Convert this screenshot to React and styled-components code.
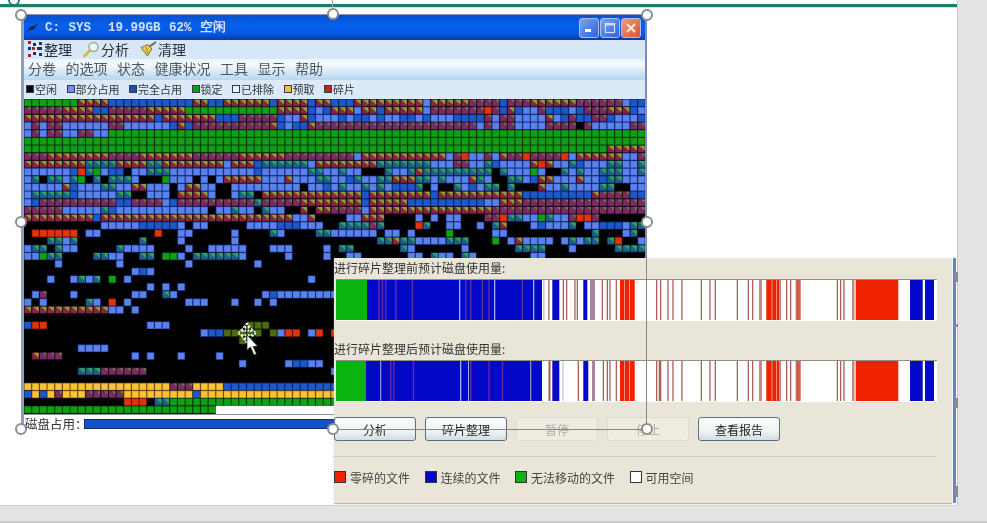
import styled, { createGlobalStyle } from 'styled-components';

const CJK = `"Noto Sans CJK SC", "Liberation Sans", sans-serif`;

const GlobalStyle = createGlobalStyle`
  html, body { margin: 0; padding: 0; background: #e3e4e3; }
  body { font-family: ${CJK}; }
`;

const Page = styled.div`
  width: 987px;
  height: 523px;
  overflow: hidden;
  background: #e3e4e3;
  position: relative;
  filter: blur(0.55px);
`;

const Slide = styled.div`
  position: relative;
  display: flow-root;
  width: 957px;
  height: 505px;
  background: #fff;
  border-right: 1px solid #c4c8c5;
  border-bottom: 1px solid #d0d2d0;
`;

const FooterLine = styled.div`
  position: absolute;
  left: 0;
  right: 0;
  top: 521px;
  height: 2px;
  background: #c9cbc9;
`;

const TealLine = styled.div`
  height: 3px;
  margin-top: 4px;
  background: #1f7d6c;
  box-shadow: 0 1px 1px #bfe4da;
`;

const Window = styled.div`
  position: absolute;
  left: 21px;
  top: 14px;
  width: 626px;
  height: 415px;
  display: flex;
  flex-direction: column;
  background: #fff;
  border-left: 3px solid #8d9cc0;
  border-right: 2px solid #7d8cb4;
  border-top: 1px solid #8a97b8;
  box-sizing: border-box;
`;

const TitleBar = styled.div`
  height: 25px;
  flex: none;
  display: flex;
  align-items: center;
  padding: 0 4px 0 1px;
  background: linear-gradient(#0a50cc 0%, #0660ec 40%, #0757e2 75%, #0a3ca8 100%);
`;

const TitleText = styled.div`
  margin-left: 4px;
  font-family: "Liberation Mono", monospace;
  font-size: 12.5px;
  font-weight: 700;
  color: #d4e0fa;
  white-space: pre;
  word-spacing: 1px;
  flex: 1;
`;

const WinButtons = styled.div`
  display: flex;
  gap: 1px;
`;

const WinButton = styled.div`
  width: 20px;
  height: 20px;
  box-sizing: border-box;
  border: 1px solid #a9c0ee;
  border-radius: 3px;
  display: flex;
  align-items: center;
  justify-content: center;
  background: ${(p) =>
    p.$close
      ? 'linear-gradient(135deg, #eda07c, #d5562a)'
      : 'linear-gradient(135deg, #7fa4ee, #2b62d8)'};
`;

const Toolbar = styled.div`
  height: 19px;
  box-sizing: border-box;
  flex: none;
  display: flex;
  align-items: center;
  padding: 0 0 2px 4px;
  gap: 11px;
  font-size: 14px;
  line-height: 16px;
  color: #2b3038;
  background: #d7e7f8;
`;

const ToolItem = styled.div`
  display: flex;
  align-items: center;
  gap: 1px;
`;

const MenuBar = styled.div`
  height: 21px;
  box-sizing: border-box;
  flex: none;
  display: flex;
  align-items: center;
  padding: 0 0 3px 4px;
  gap: 9.5px;
  font-size: 14px;
  line-height: 16px;
  color: #4d5864;
  background: linear-gradient(#eaf5fd 0%, #f3faff 25%, #cfe4f5 70%, #b9d6ee 100%);
`;

const KeyBar = styled.div`
  height: 19px;
  box-sizing: border-box;
  flex: none;
  display: flex;
  align-items: center;
  padding: 0 0 1px 2px;
  gap: 9.5px;
  font-size: 11px;
  line-height: 13px;
  color: #333;
  background: #dce9f8;
`;

const KeyItem = styled.div`
  display: flex;
  align-items: center;
  gap: 1px;
`;

const KeySwatch = styled.span`
  width: 8px;
  height: 8px;
  box-sizing: border-box;
  border: 1px solid #333a50;
  background: ${(p) => p.$color};
`;

const MapFrame = styled.div`
  height: 315px;
  flex: none;
  background: #000;
  overflow: hidden;
  svg { display: block; }
`;

const Status = styled.div`
  flex: 1;
  min-height: 0;
  display: flex;
  align-items: center;
  padding: 3px 0 0 1px;
  border-top: 1px solid #8b8f98;
  font-size: 12.5px;
  line-height: 11px;
  color: #333;
`;

const StatusLabel = styled.span`
  width: 59px;
  flex: none;
  white-space: nowrap;
`;

const Usage = styled.div`
  flex: 1;
  height: 10px;
  box-sizing: border-box;
  background: #1253c8;
  border: 1px solid #1a2f70;
`;

const Panel = styled.div`
  position: absolute;
  left: 334px;
  top: 258px;
  width: 618px;
  height: 245px;
  box-sizing: border-box;
  background: #e9e6d9;
  box-shadow: 0 1px 1px #b8b7ad;
`;

const BarLabel = styled.div`
  height: 20px;
  line-height: 20px;
  font-size: 12px;
  color: #333;
  margin-top: ${(p) => p.$top}px;
`;

const BarChart = styled.svg`
  display: block;
  margin-top: 1px;
`;

const Buttons = styled.div`
  display: flex;
  gap: 9px;
  margin-top: 15px;
`;

const Button = styled.div`
  width: 82px;
  height: 24px;
  box-sizing: border-box;
  display: flex;
  align-items: center;
  justify-content: center;
  font-size: 12px;
  border-radius: 3px;
  color: ${(p) => (p.$disabled ? '#b0ae9f' : '#222')};
  border: 1px solid ${(p) => (p.$disabled ? '#dcdacb' : '#5b6f80')};
  background: ${(p) =>
    p.$disabled ? '#efede2' : 'linear-gradient(#fdfefe, #eef2f3 60%, #d5dde2)'};
`;

const Divider = styled.div`
  width: 603px;
  height: 1px;
  margin-top: 15px;
  background: #cfccbc;
`;

const Legend = styled.div`
  display: flex;
  gap: 14.5px;
  height: 20px;
  align-items: center;
  margin-top: 10px;
  font-size: 12px;
  color: #444;
`;

const LegendItem = styled.div`
  display: flex;
  align-items: center;
  gap: 4px;
`;

const LegendSwatch = styled.span`
  width: 12px;
  height: 12px;
  box-sizing: border-box;
  border: 1px solid #333;
  background: ${(p) => p.$color};
`;

const Strip = styled.div`
  position: absolute;
  left: 953px;
  top: 258px;
  width: 3px;
  height: 245px;
  background: #6d80c0;
`;

const StripMark = styled.div`
  position: absolute;
  left: 2px;
  top: ${(p) => p.$top}px;
  width: 3px;
  height: ${(p) => p.$height}px;
  background: #8a8c90;
`;

const Handle = styled.div`
  position: absolute;
  left: ${(p) => p.$x - 6}px;
  top: ${(p) => p.$y - 6}px;
  width: 12px;
  height: 12px;
  box-sizing: border-box;
  border-radius: 50%;
  background: #fff;
  border: 2px solid #8a8d8c;
`;

const GuideH = styled.div`
  position: absolute;
  left: 334px;
  top: 429px;
  width: 313px;
  height: 1px;
  background: #85888a;
`;

const GuideV = styled.div`
  position: absolute;
  left: 646px;
  top: 258px;
  width: 1px;
  height: 171px;
  background: #85888a;
`;

const RotateStem = styled.div`
  position: absolute;
  left: 332px;
  top: 0;
  width: 1px;
  height: 10px;
  background: #aaa;
`;

const TealKnob = styled.div`
  position: absolute;
  left: 8px;
  top: -6px;
  width: 12px;
  height: 12px;
  box-sizing: border-box;
  border-radius: 50%;
  border: 2px solid #1f7d6c;
  background: #fff;
`;

const Pointer = styled.svg`
  position: absolute;
  left: 236px;
  top: 322px;
`;

// run-length rows: letter + count, left half then right half
const rows = [
  'G7 F4 B11 F2 B2 F6 B1 F4 B1 F2 B3 F9 L1 F5 f4 B1 f3 F6 f6 L1 B2',
  'f5 F4 B2 f5 F5 G12 F4 B1 L1 B1 F3 L1 F2 B1 F5 L1 f7 R1 f1 B1 F1 B1 L2 f1 B3 L1 B1 f3 F3 B1 L1',
  'F17 B1 F7 B3 f5 B1 L2 F1 B1 L2 L1 B1 L1 B2 L1 B1 L2 B2 L1 B1 L3 B4 f1 L1 f2 L4 F1 L1 B1 f1 B2 f2 B1 L3 B1',
  'L1 f1 L1 f2 L6 f2 L6 B1 F1 B1 f10 F1 B1 L1 B2 F1 f3 f18 L1 f1 L1 f2 L4 f4 K1 f1 L5 f3',
  'L1 f1 L1 f2 L2 f2 L2 G70',
  'G81',
  'G76 F5',
  'f3 F8 f4 F7 f6 F6 f6 f3 L1 F11 L1 f1 R1 L2 f1 L1 F1 f2 R1 f4 R1 L1 F6 L2 f1',
  'F8 T4 F4 T2 F8 L1 F3 B1 T6 L1 F2 F6 T7 L3 f2 L2 T1 B1 L4 F1 R1 F1 L2 T1 B1 L3 T2 L2 T1',
  'L6 B1 R1 T1 G1 L1 B2 K1 L2 T3 L11 B1 L6 T2 L1 L1 T1 L2 K3 T1 L2 T1 F1 T9 K1 T1 L3 G1 L1 K2 T1 L1 T1 L2 T3 L2 T1',
  'L1 T1 K1 T2 L1 T1 G1 K1 T1 K1 T3 L1 K3 G1 L3 K1 L1 K1 L1 F5 L3 F1 L3 T2 L1 L1 B1 T1 L2 T2 F3 T2 L1 T1 L3 F1 T1 L1 K2 T2 L1 B1 F2 L3 F1 L2 B1 T2 L3 B1',
  'L5 F1 B1 L3 T2 L2 F2 L3 K1 L1 F2 L2 K2 L9 K1 L2 B1 L1 T1 L2 T1 L1 T1 L1 B3 T1 K1 L1 K2 T1 L1 B1 L1 T2 K1 T1 K3 F1 L2 T1 L4 T2 K2 L2',
  'L1 T5 B1 L5 T2 K2 L3 K1 F4 L1 K2 L1 T2 K1 F9 F4 B1 F8 B1 F11 B9 F1 f4 B2',
  'L1 B1 f10 B2 f4 L1 B1 f10 T1 f5 F4 F4 B1 F5 B10 L2 F3 f16',
  'f5 L5 T1 B1 L12 K1 L2 T1 L2 K1 T1 L2 K2 F1 K1 F2 f4 L1 F16 f20',
  'F9 B1 F25 L2 F1 K2 K2 L2 F3 K4 L1 K1 L1 K1 L2 K3 f2 R1 T2 L2 G1 T1 L2 f1 R2 f1 K6',
  'K10 L5 B5 L1 K1 L2 K5 L4 B3 L3 K1 K1 T4 f1 T1 K4 R1 T1 K2 L2 K2 L1 K1 T1 F1 K3 L1 B1 L3 T1 K1 L2 B3 L1 T2',
  'K1 R6 K1 L2 K7 R1 K2 L2 K5 L1 K4 T1 L1 K4 T2 L6 K1 L2 K1 L1 K4 G1 K5 L2 K11 T1 K3 L1 T1 K1',
  'K3 T2 L1 T1 K8 T1 K4 L1 K6 L1 K12 K6 T2 F1 T2 L4 T3 K3 G1 K1 L1 F1 L4 K1 L1 T1 L1 T2 K1 T1 R1 K2 L1',
  'L1 T2 K1 T1 L2 K5 T1 L4 K4 L1 K2 L5 K3 L3 K4 L1 K1 T2 K6 T1 L1 K6 L1 K6 T4 K3 L1 K5 T4',
  'L2 G1 T2 K4 T2 L2 K2 T2 K1 G2 L1 K1 T6 L1 K5 L1 K4 L1 K2 L2 K6 L2 K1 T1 L2 K1 T1 L1 K7 L2 K13',
  'K4 L1 K7 L1 K8 L1 K8 L1 K9',
  'K14 L1 B1 L1',
  'K3 L1 K2 L1 T1 L1 T1 K1 G1 K1 L1 K23 L1 K3',
  'K16 L1 K1 L1 K1 L1',
  'K1 L1 f1 K3 L1 K7 L2 K2 T1 L1 K11 L1 B1 L8',
  'L1 K1 L1 K5 T1 L1 K1 R1 K1 L1 K7 L3 K3 L1 K2 L1 K1 L1 K8',
  'F11 L2 K1 L1',
  'K81',
  'B1 R2 K13 L3 K10 O3',
  'K23 L1 B2 O5 K1 O1 L1 R2 K1 L1 R1 K1 R1',
  'K28 O1',
  'K7 L4',
  'K1 F1 f3 K9 L1 K1 L1 K3 L1 K4 L1',
  'K28 L1 K5 L1 B2 L2',
  'K7 T3 f6 K24 L1',
  'K81',
  'Y19 f3 Y4 B15',
  'B1 Y1 B1 Y1 f1 Y3 f5 Y9 B1 Y18',
  'K13 R3 K1 T2 G22',
  'G25 W56',
];

const PITCH = 7.67;

const cellColors = {
  G: ['#075010', '#10a014'],
  B: ['#0e3080', '#1c58c8'],
  L: ['#1f3c98', '#5a82ea'],
  R: ['#7a1806', '#e0340f'],
  Y: ['#8c6a14', '#f8c23a'],
  O: ['#142808', '#4c6c10'],
  F: ['#2a0e20', '#8a2444'],
  f: ['#2a0e30', '#7c2a62'],
  T: ['#0c2c50', '#1f5f90'],
};

const cornerColors = { F: '#86a82a', f: '#5c8a3a', T: '#2fa850' };

const parseRow = (row) => {
  const cells = [];
  row.split(' ').forEach((run) => {
    const n = Number(run.slice(1));
    for (let i = 0; i < n; i++) cells.push(run[0]);
  });
  return cells;
};

function DiskMap() {
  return (
    <svg width="622" height="315">
      {rows.map((row, r) =>
        parseRow(row).map((c, i) => {
          if (c === 'K') return null;
          const x = i * PITCH;
          const y = r * PITCH;
          if (c === 'W')
            return <rect key={`${r}-${i}`} x={x} y={y} width={PITCH + 1} height={PITCH + 1} fill="#fff" />;
          const [edge, fill] = cellColors[c];
          return (
            <g key={`${r}-${i}`}>
              <rect x={x} y={y} width={PITCH} height={PITCH} fill={edge} />
              <rect x={x + 0.7} y={y + 0.7} width={PITCH - 1.3} height={PITCH - 1.3} fill={fill} />
              {cornerColors[c] && (
                <polygon
                  points={
                    c === 'f'
                      ? `${x + 3.5},${y + 0.7} ${x + 7},${y + 0.7} ${x + 7},${y + 4}`
                      : `${x + 1.5},${y + 0.7} ${x + 7},${y + 0.7} ${x + 7},${y + 5.5}`
                  }
                  fill={cornerColors[c]}
                />
              )}
            </g>
          );
        })
      )}
    </svg>
  );
}

const BROWN = '#a8605c';
const PURPLE = '#5a2c9c';
const PALE = '#9cb4f0';
const RED = '#ee2200';
const BLUE = '#0408c8';

const sharedStripes = [
  ...[656, 660, 667.3, 672.3, 681.3, 700.7, 709.3, 714.7, 736.7, 747.7, 752].map((x) => [x, 1.3, BROWN]),
  [759, 3, '#c48a84'],
  [766.3, 13, RED],
  [771.5, 1, '#f0907c'],
  [776, 1, '#f0907c'],
  [779.5, 1.3, BROWN],
  [786, 1.3, BROWN],
  [790, 1.3, BROWN],
  [795.7, 5, '#d0604f'],
  [836.7, 1.3, BROWN],
  [840, 1.3, BROWN],
  [843.3, 1.3, BROWN],
  [852, 2.5, '#c48a84'],
  [855.7, 42.6, RED],
  [910, 12.7, BLUE],
  [925, 9, BLUE],
  [620, 14.7, RED],
  [624, 1, '#f0907c'],
  [629, 1, '#f0907c'],
];

const beforeBar = [
  [336, 31, '#0ab40e'],
  [367, 175, BLUE],
  ...[378.3, 381.7, 385, 395, 411.7, 465, 470, 481.7, 488.3, 521.7].map((x) => [x, 1.5, PURPLE]),
  [459, 1.3, PALE],
  [494, 1.3, PALE],
  [533, 1.3, PALE],
  [543.3, 1.2, '#d0b0b0'],
  [548.3, 1.3, BROWN],
  [552.3, 7, BLUE],
  [562.7, 1.3, BROWN],
  [566, 1.3, BROWN],
  [574.3, 1.3, BROWN],
  [576.7, 1.3, BROWN],
  [583.3, 4, BLUE],
  [590, 5, '#a884a0'],
  [601.7, 1.3, BROWN],
  [606.7, 1.3, BROWN],
  [609.3, 1.3, BROWN],
  [615.7, 1.3, BROWN],
  ...sharedStripes,
];

const afterBar = [
  [336, 30, '#0ab40e'],
  [366, 176, BLUE],
  ...[390, 393, 412.7, 470, 488.3, 501.7].map((x) => [x, 1.5, PURPLE]),
  [380, 1.3, '#8a88c8'],
  [460, 1.3, PALE],
  [468, 1, PALE],
  [530, 1.3, '#8a88c8'],
  [548.5, 2, '#a85c50'],
  [552.3, 7, BLUE],
  [562.3, 1.3, '#b8c8f0'],
  [577.7, 1.3, BROWN],
  [583.3, 5, BLUE],
  [592, 3, '#a884a0'],
  [602.7, 1.3, BROWN],
  [606.7, 1.3, BROWN],
  [609.3, 1.3, BROWN],
  [615.7, 1.3, BROWN],
  [658.7, 1.3, BROWN],
  ...sharedStripes,
];

function UsageBar({ segments }) {
  return (
    <BarChart width="603" height="42">
      <rect x="2" y="0" width="601" height="42" fill="#fff" />
      {segments.map(([x, w, color], i) => (
        <rect key={i} x={x - 334} y="0" width={w} height="41" fill={color} />
      ))}
      <rect x="2" y="0" width="601" height="1" fill="#8f8f88" />
    </BarChart>
  );
}

const keyItems = [
  { color: '#000', label: '空闲' },
  { color: '#6f93ea', label: '部分占用' },
  { color: '#1c50b0', label: '完全占用' },
  { color: '#10a014', label: '锁定' },
  { color: '#eef2fa', label: '已排除' },
  { color: '#f6c03a', label: '预取' },
  { color: '#d0201a', label: '碎片' },
];

const menuItems = ['分卷', '的选项', '状态', '健康状况', '工具', '显示', '帮助'];

const legendItems = [
  { color: '#ee2200', label: '零碎的文件' },
  { color: '#0408c8', label: '连续的文件' },
  { color: '#0ab40e', label: '无法移动的文件' },
  { color: '#fff', label: '可用空间' },
];

const buttons = [
  { label: '分析' },
  { label: '碎片整理' },
  { label: '暂停', disabled: true },
  { label: '停止', disabled: true },
  { label: '查看报告' },
];

const handles = [
  [21, 15], [333, 14], [647, 15],
  [21, 222], [647, 222],
  [21, 429], [333, 429], [647, 429],
];

const stripMarks = [
  [14, 10],
  [66, 3],
  [140, 10],
  [228, 11],
];

function BirdIcon() {
  return (
    <svg width="16" height="12" viewBox="0 0 16 12">
      <path d="M1 11 L5 5 L15 1 L9 5 L12 5 L7 8 L4 8 Z" fill="#1a2448" />
    </svg>
  );
}

function DefragIcon() {
  return (
    <svg width="15" height="16" viewBox="0 0 15 16">
      <path d="M1 1 L7 7 M13 1 L7 7 M1 15 L7 9 M13 15 L7 9" stroke="#f4f7fc" strokeWidth="2" />
      <g fill="#b01c30">
        <rect x="0" y="0" width="3" height="3" />
        <rect x="0" y="13" width="3" height="3" />
        <rect x="4" y="6" width="3" height="3" />
      </g>
      <g fill="#1c2c80">
        <rect x="0" y="6" width="3" height="3" />
        <rect x="5" y="2" width="3" height="3" />
        <rect x="5" y="11" width="3" height="3" />
        <rect x="11" y="1" width="3" height="3" />
        <rect x="11" y="12" width="3" height="3" />
        <rect x="9" y="6" width="5" height="3" />
      </g>
    </svg>
  );
}

function LensIcon() {
  return (
    <svg width="17" height="16" viewBox="0 0 17 16">
      <circle cx="10.5" cy="6" r="4.6" fill="#eef3f8" stroke="#a8a890" strokeWidth="1.5" />
      <path d="M7 9.5 L1.5 15" stroke="#d6b44c" strokeWidth="2.6" strokeLinecap="round" />
    </svg>
  );
}

function BroomIcon() {
  return (
    <svg width="17" height="16" viewBox="0 0 17 16">
      <path d="M16 1 L9 6" stroke="#6c6a3c" strokeWidth="2" />
      <path d="M8 3.5 L12 8 L7.5 15 L1 6.5 Z" fill="#e8c850" stroke="#5c5a30" strokeWidth="0.8" />
      <path d="M6 6 L8 13" stroke="#8c7a30" strokeWidth="0.8" />
    </svg>
  );
}

export default function App() {
  return (
    <Page>
      <GlobalStyle />
      <Slide>
        <TealLine />
        <TealKnob />
        <RotateStem />
        <Window>
          <TitleBar>
            <BirdIcon />
            <TitleText>{'C: SYS  19.99GB 62% 空闲'}</TitleText>
            <WinButtons>
              <WinButton>
                <svg width="10" height="10"><rect x="1" y="6" width="6" height="3" fill="#fff" /></svg>
              </WinButton>
              <WinButton>
                <svg width="12" height="12"><rect x="1.5" y="1.5" width="9" height="9" fill="none" stroke="#cfe0ff" strokeWidth="1.2" /><rect x="1" y="1" width="10" height="2.5" fill="#cfe0ff" /></svg>
              </WinButton>
              <WinButton $close>
                <svg width="12" height="12"><path d="M2 2 L10 10 M10 2 L2 10" stroke="#fbe8dc" strokeWidth="2.2" /></svg>
              </WinButton>
            </WinButtons>
          </TitleBar>
          <Toolbar>
            <ToolItem><DefragIcon />整理</ToolItem>
            <ToolItem><LensIcon />分析</ToolItem>
            <ToolItem><BroomIcon />清理</ToolItem>
          </Toolbar>
          <MenuBar>
            {menuItems.map((m) => <span key={m}>{m}</span>)}
          </MenuBar>
          <KeyBar>
            {keyItems.map((k) => (
              <KeyItem key={k.label}>
                <KeySwatch $color={k.color} />
                {k.label}
              </KeyItem>
            ))}
          </KeyBar>
          <MapFrame>
            <DiskMap />
          </MapFrame>
          <Status>
            <StatusLabel>磁盘占用：</StatusLabel>
            <Usage />
          </Status>
        </Window>
        <Panel>
          <BarLabel $top={0}>进行碎片整理前预计磁盘使用量:</BarLabel>
          <UsageBar segments={beforeBar} />
          <BarLabel $top={18}>进行碎片整理后预计磁盘使用量:</BarLabel>
          <UsageBar segments={afterBar} />
          <Buttons>
            {buttons.map((b) => (
              <Button key={b.label} $disabled={b.disabled}>{b.label}</Button>
            ))}
          </Buttons>
          <Divider />
          <Legend>
            {legendItems.map((l) => (
              <LegendItem key={l.label}>
                <LegendSwatch $color={l.color} />
                {l.label}
              </LegendItem>
            ))}
          </Legend>
        </Panel>
        <Strip>
          {stripMarks.map(([top, height]) => (
            <StripMark key={top} $top={top} $height={height} />
          ))}
        </Strip>
        <GuideH />
        <GuideV />
        {handles.map(([x, y]) => <Handle key={`${x}-${y}`} $x={x} $y={y} />)}
        <Pointer width="26" height="36" viewBox="0 0 26 36">
          <path
            d="M11 1 L14 5 L12.5 5 L12.5 9 L16 9 L16 7.5 L20 11 L16 14.5 L16 13 L12.5 13 L12.5 17 L14 17 L11 21 L8 17 L9.5 17 L9.5 13 L6 13 L6 14.5 L2 11 L6 7.5 L6 9 L9.5 9 L9.5 5 L8 5 Z"
            fill="none"
            stroke="#fff"
            strokeWidth="1.6"
            strokeDasharray="2 1"
          />
          <path d="M11 13 L11 28 L14.5 25 L18 33 L20.5 32 L17 24.5 L21.5 24 Z" fill="#fff" stroke="#222" strokeWidth="0.7" />
        </Pointer>
      </Slide>
      <FooterLine />
    </Page>
  );
}
